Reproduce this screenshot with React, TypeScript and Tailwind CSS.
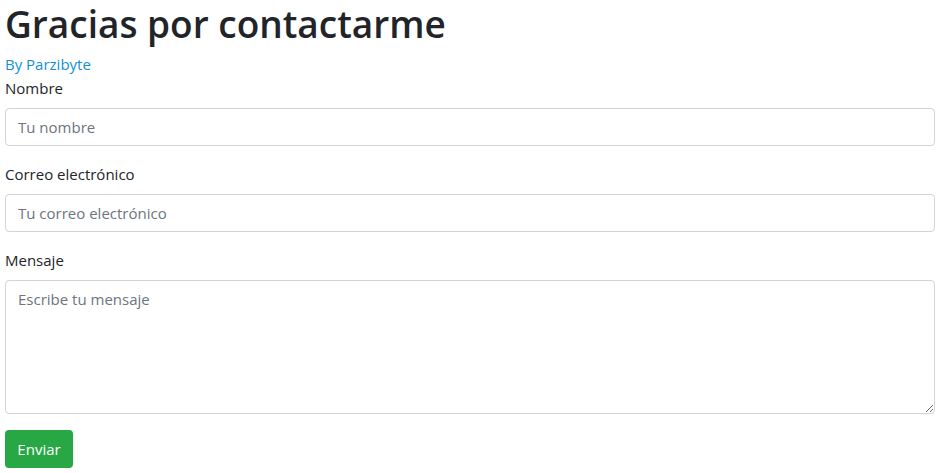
export default function App() {
  const inputClass =
    "block w-full h-[38px] px-3 rounded-[4px] border border-[#ced4da] bg-white text-[15px] text-[#495057] placeholder:text-[#6c757d] focus:outline-none";

  return (
    <div className="min-h-screen bg-white pl-[5px] pr-[8px] text-[#212529] font-['Open_Sans',sans-serif]">
      <h1 className="text-[37px] font-semibold leading-[48px] mb-[4px]">Gracias por contactarme</h1>
      <a href="#" className="block text-[15px] leading-6 text-[#138fd6]">
        By Parzibyte
      </a>
      <form>
        <div className="mb-4">
          <label htmlFor="nombre" className="block text-[15px] leading-6 mb-2">Nombre</label>
          <input id="nombre" type="text" placeholder="Tu nombre" className={inputClass} />
        </div>
        <div className="mb-4">
          <label htmlFor="correo" className="block text-[15px] leading-6 mb-2">Correo electrónico</label>
          <input id="correo" type="email" placeholder="Tu correo electrónico" className={inputClass} />
        </div>
        <div className="mb-4">
          <label htmlFor="mensaje" className="block text-[15px] leading-6 mb-2">Mensaje</label>
          <textarea
            id="mensaje"
            placeholder="Escribe tu mensaje"
            className="block w-full h-[134px] px-3 py-[6px] rounded-[4px] border border-[#ced4da] bg-white text-[15px] leading-6 text-[#495057] placeholder:text-[#6c757d] focus:outline-none"
          />
        </div>
        <button type="submit" className="h-[38px] w-[68px] rounded-[4px] bg-[#28a745] text-white text-[15px]">
          Enviar
        </button>
      </form>
    </div>
  );
}
